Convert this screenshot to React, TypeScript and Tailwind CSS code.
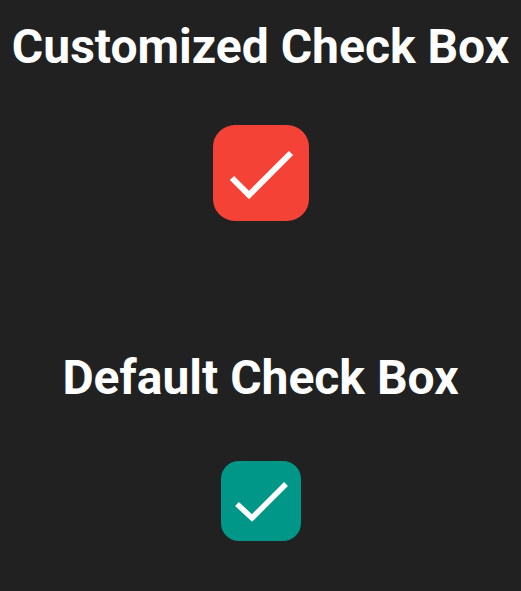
import React from 'react'

function RedCheck() {
  return (
    <svg width={96} height={96} viewBox="0 0 96 96" fill="none">
      <path d="M19 53 L36 70 L78 28" stroke="white" strokeWidth={6} strokeLinecap="butt" strokeLinejoin="miter" />
    </svg>
  )
}

function GreenCheck() {
  return (
    <svg width={80} height={80} viewBox="0 0 80 80" fill="none">
      <path d="M16 43 L31 57 L65 23" stroke="white" strokeWidth={5.5} strokeLinecap="butt" strokeLinejoin="miter" />
    </svg>
  )
}

export default function App() {
  return (
    <div
      className="min-h-screen w-full bg-[#212121] flex flex-col items-center text-white"
      style={{fontFamily: 'Roboto, "Liberation Sans", sans-serif'}}
    >
      <h1 className="mt-[17px] text-[48px] leading-[60px] font-bold">Customized Check Box</h1>
      <div className="mt-[48px] w-24 h-24 rounded-[22px] bg-[#f44336]">
        <RedCheck />
      </div>
      <h1 className="mt-[127px] text-[48px] leading-[60px] font-bold">Default Check Box</h1>
      <div className="mt-[53px] w-20 h-20 rounded-[18px] bg-[#009688]">
        <GreenCheck />
      </div>
    </div>
  )
}
